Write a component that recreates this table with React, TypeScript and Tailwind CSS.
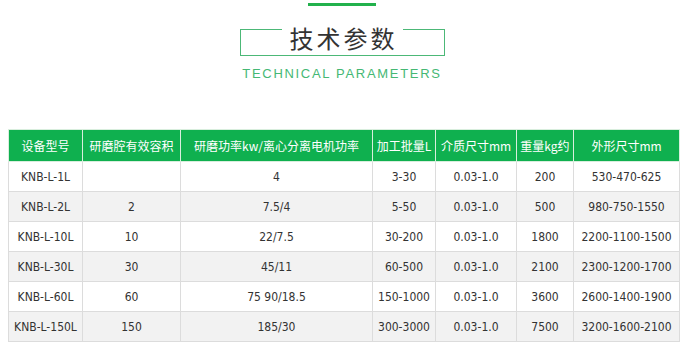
import React from "react";

const cols = [74, 98, 192, 63, 81, 57, 106];

const headers = [
  "设备型号",
  "研磨腔有效容积",
  "研磨功率kw/离心分离电机功率",
  "加工批量L",
  "介质尺寸mm",
  "重量kg约",
  "外形尺寸mm",
];

const rows = [
  ["KNB-L-1L", "", "4", "3-30", "0.03-1.0", "200", "530-470-625"],
  ["KNB-L-2L", "2", "7.5/4", "5-50", "0.03-1.0", "500", "980-750-1550"],
  ["KNB-L-10L", "10", "22/7.5", "30-200", "0.03-1.0", "1800", "2200-1100-1500"],
  ["KNB-L-30L", "30", "45/11", "60-500", "0.03-1.0", "2100", "2300-1200-1700"],
  ["KNB-L-60L", "60", "75 90/18.5", "150-1000", "0.03-1.0", "3600", "2600-1400-1900"],
  ["KNB-L-150L", "150", "185/30", "300-3000", "0.03-1.0", "7500", "3200-1600-2100"],
];

export default function App() {
  return (
    <div className="w-[684px] h-[351px] bg-white overflow-hidden font-['Liberation_Sans',sans-serif]">
      {/* Titulo */}
      <div className="flex flex-col items-center pt-[3px]">
        <div className="w-[68px] h-[3px] bg-[#22b14c]" />
        <div className="mt-[23px] w-[205px] flex h-[27px]">
          <div className="w-[42px] border-t border-l border-b border-[#4cb877]" />
          <div className="flex-1 border-b border-[#4cb877] flex justify-center">
            <span className="-mt-[3px] h-[24px] leading-[24px] text-[24px] tracking-[3px] pl-[3px] text-[#333] font-['Noto_Sans_CJK_SC',sans-serif]">
              技术参数
            </span>
          </div>
          <div className="w-[42px] border-t border-r border-b border-[#4cb877]" />
        </div>
        <p className="mt-[10px] text-[13px] leading-[16px] tracking-[1.7px] text-[#45b874]">
          TECHNICAL PARAMETERS
        </p>
      </div>

      {/* Tabela */}
      <table className="mt-[47px] ml-[8px] w-[671px] table-fixed border-collapse border border-[#c8c8c8] text-center">
        <colgroup>
          {cols.map((w, i) => (
            <col key={i} style={{ width: w }} />
          ))}
        </colgroup>
        <thead>
          <tr className="bg-[#0fb04f] h-[32px]">
            {headers.map((h) => (
              <th
                key={h}
                className="p-0 border border-[#d8eedd] text-[12px] font-normal text-white whitespace-nowrap font-['Noto_Sans_CJK_SC',sans-serif]"
              >
                {h}
              </th>
            ))}
          </tr>
        </thead>
        <tbody>
          {rows.map((r, i) => (
            <tr key={i} className={i % 2 === 1 ? "bg-[#f2f2f2] h-[30px]" : "bg-white h-[30px]"}>
              {r.map((c, j) => (
                <td
                  key={j}
                  className="p-0 border border-[#dcdcdc] text-[12px] text-[#333] whitespace-nowrap font-['DejaVu_Sans_Condensed','DejaVu_Sans',sans-serif] font-stretch-condensed"
                >
                  {c}
                </td>
              ))}
            </tr>
          ))}
        </tbody>
      </table>
    </div>
  );
}
